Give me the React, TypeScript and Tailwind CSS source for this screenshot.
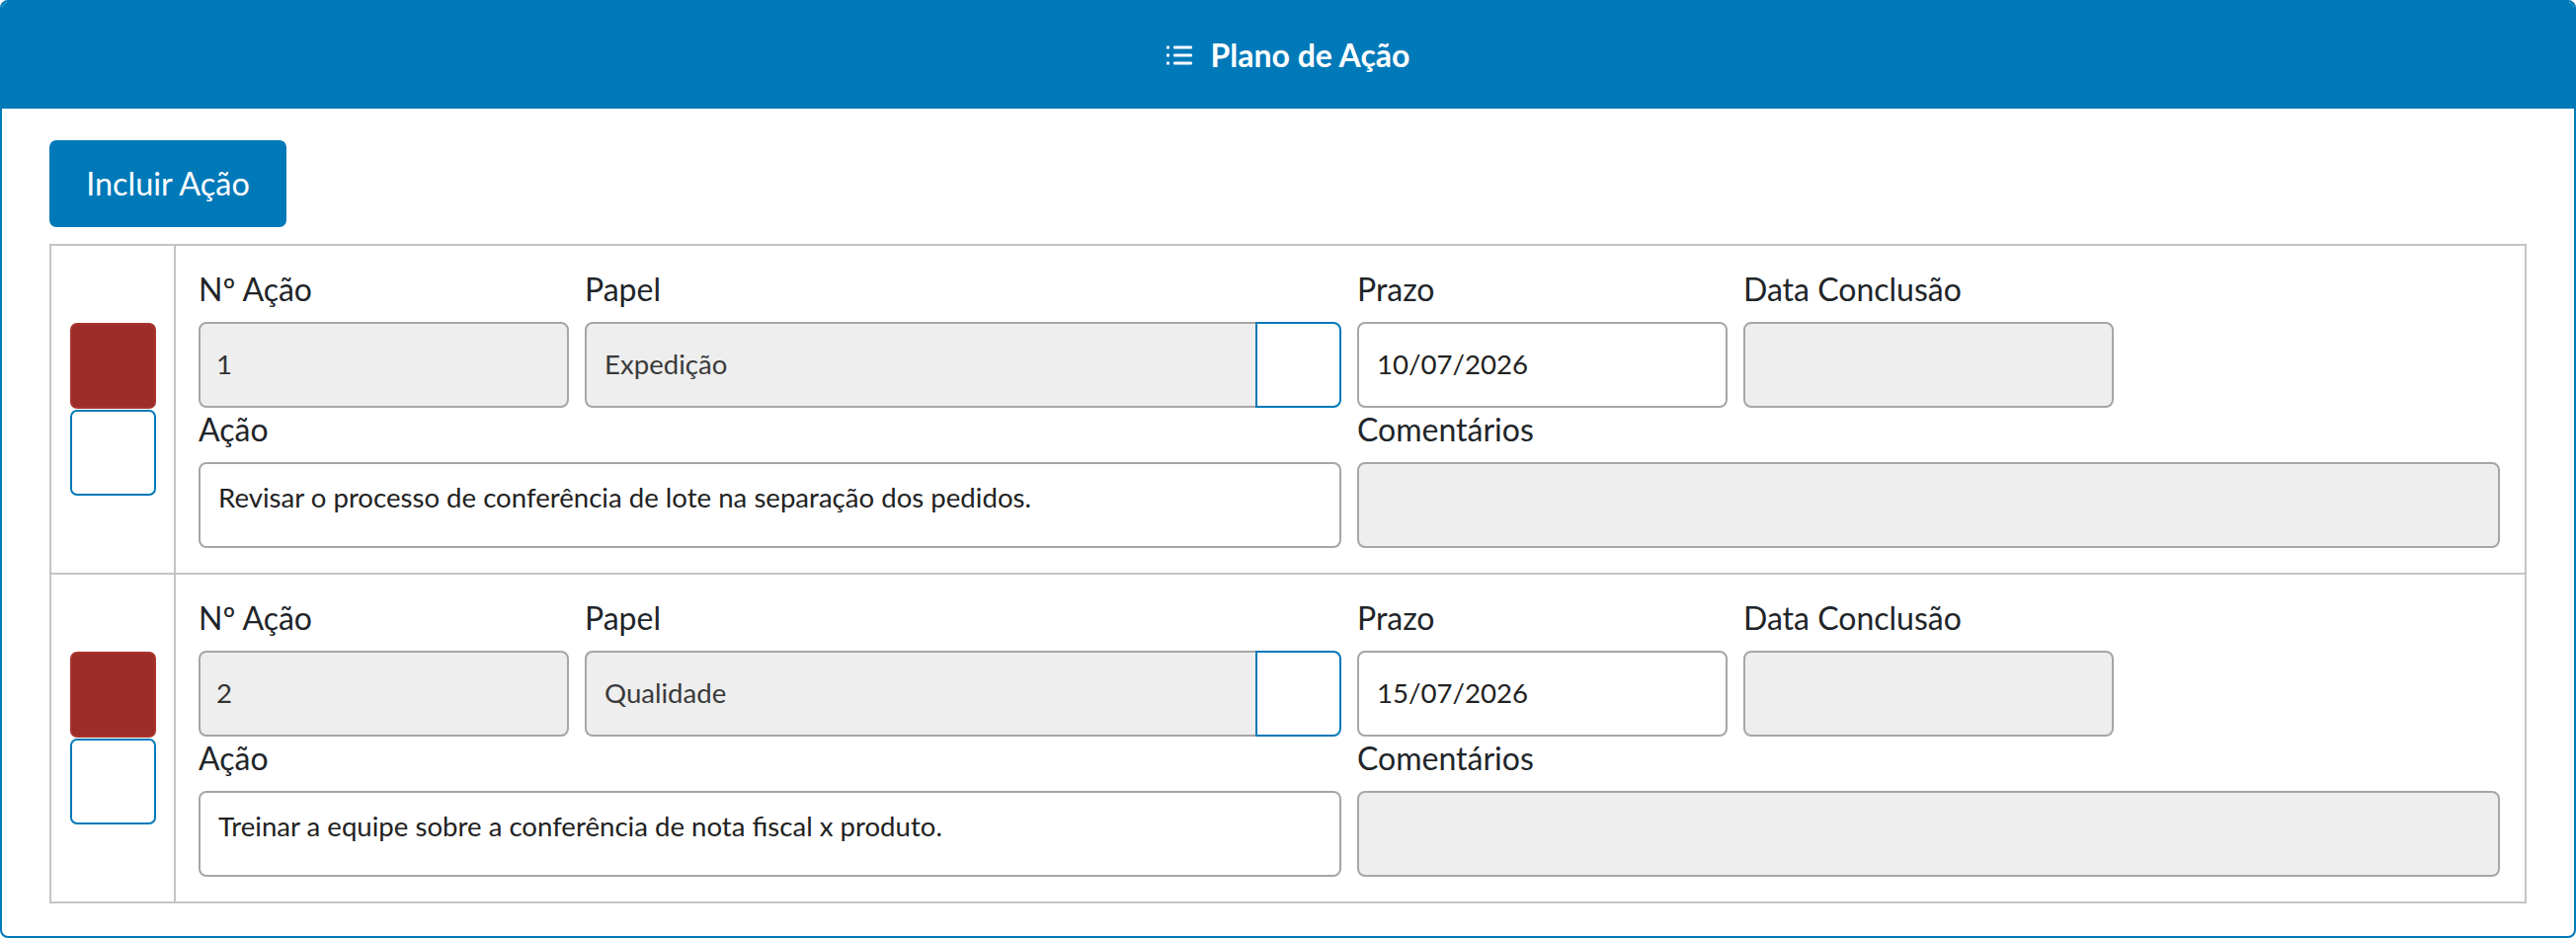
import React from "react";

type Row = { n: string; papel: string; prazo: string; acao: string };

const rows: Row[] = [
  { n: "1", papel: "Expedição", prazo: "10/07/2026", acao: "Revisar o processo de conferência de lote na separação dos pedidos." },
  { n: "2", papel: "Qualidade", prazo: "15/07/2026", acao: "Treinar a equipe sobre a conferência de nota fiscal x produto." },
];

function ListIcon() {
  return (
    <svg width="26" height="20" viewBox="0 0 26 20" fill="none">
      <rect x="0" y="0.5" width="3" height="3" rx="0.6" fill="white" />
      <rect x="0" y="8.5" width="3" height="3" rx="0.6" fill="white" />
      <rect x="0" y="16.5" width="3" height="3" rx="0.6" fill="white" />
      <rect x="7" y="0.5" width="19" height="3" rx="1.2" fill="white" />
      <rect x="7" y="8.5" width="19" height="3" rx="1.2" fill="white" />
      <rect x="7" y="16.5" width="19" height="3" rx="1.2" fill="white" />
    </svg>
  );
}

function Label({ children, top }: { children: React.ReactNode; top?: boolean }) {
  return (
    <div className={`text-[32px] leading-[40px] text-[#212529] mb-[13px] whitespace-nowrap ${top ? "" : "mt-[2px]"}`}>
      {children}
    </div>
  );
}

function ActionRow({ r, last }: { r: Row; last: boolean }) {
  return (
    <div className={`flex ${last ? "" : "border-b-2 border-[#c4c4c4]"}`}>
      <div className="w-[126px] shrink-0 border-r-2 border-[#c4c4c4] flex flex-col items-center justify-center">
        <div className="w-[87px] h-[87px] rounded-[7px] bg-[#9c2d29] border-2 border-[#a9332f]" />
        <div className="w-[87px] h-[87px] rounded-[7px] bg-white border-2 border-[#0079b9] mt-[1px]" />
      </div>
      <div className="flex-1 pl-[23px] pr-[25px] pt-[24px] pb-[25px]">
        <div className="grid grid-cols-6 gap-x-[16px]">
          <div className="col-span-1">
            <Label top>Nº Ação</Label>
            <div className="h-[87px] border-2 border-[#a6a6a6] rounded-[8px] bg-[#eeeeee] pl-[16px] pb-[2px] flex items-center text-[27.6px] text-[#333333]">
              {r.n}
            </div>
          </div>
          <div className="col-span-2">
            <Label top>Papel</Label>
            <div className="flex h-[87px]">
              <div className="flex-1 border-2 border-r-0 border-[#a6a6a6] rounded-l-[8px] bg-[#eeeeee] pl-[18px] pb-[2px] flex items-center text-[27.6px] text-[#3a3a3a]">
                {r.papel}
              </div>
              <div className="w-[87px] border-2 border-[#0079b9] rounded-r-[8px] bg-white" />
            </div>
          </div>
          <div className="col-span-1">
            <Label top>Prazo</Label>
            <div className="h-[87px] border-2 border-[#a6a6a6] rounded-[8px] bg-white pl-[18px] pb-[2px] flex items-center text-[27.6px] text-[#222222]">
              {r.prazo}
            </div>
          </div>
          <div className="col-span-1">
            <Label top>Data Conclusão</Label>
            <div className="h-[87px] border-2 border-[#a6a6a6] rounded-[8px] bg-[#eeeeee]" />
          </div>
          <div className="col-span-1" />
          <div className="col-span-3">
            <Label>Ação</Label>
            <div className="h-[87px] border-2 border-[#a6a6a6] rounded-[8px] bg-white pl-[18px] pt-[14px] text-[27.6px] leading-[40px] text-[#222222] whitespace-nowrap">
              {r.acao}
            </div>
          </div>
          <div className="col-span-3">
            <Label>Comentários</Label>
            <div className="h-[87px] border-2 border-[#a6a6a6] rounded-[8px] bg-[#eeeeee]" />
          </div>
        </div>
      </div>
    </div>
  );
}

export default function App() {
  return (
    <div className="w-[2608px] h-[950px] bg-white font-['Lato',sans-serif]">
      <div className="h-[950px] border-2 border-[#0079b9] rounded-[8px] overflow-hidden flex flex-col">
        <div className="h-[108px] shrink-0 bg-[#0079b9] flex items-center justify-center gap-[19px]">
          <ListIcon />
          <span className="text-[32px] font-bold text-white leading-none">Plano de Ação</span>
        </div>
        <div className="pl-[48px] pr-[48px] pt-[32px]">
          <button className="w-[240px] h-[88px] rounded-[7px] bg-[#0079b9] text-white text-[32.4px] flex items-center justify-center">
            Incluir Ação
          </button>
          <div className="mt-[17px] border-2 border-[#c4c4c4]">
            {rows.map((r, i) => (
              <ActionRow key={i} r={r} last={i === rows.length - 1} />
            ))}
          </div>
        </div>
      </div>
    </div>
  );
}
